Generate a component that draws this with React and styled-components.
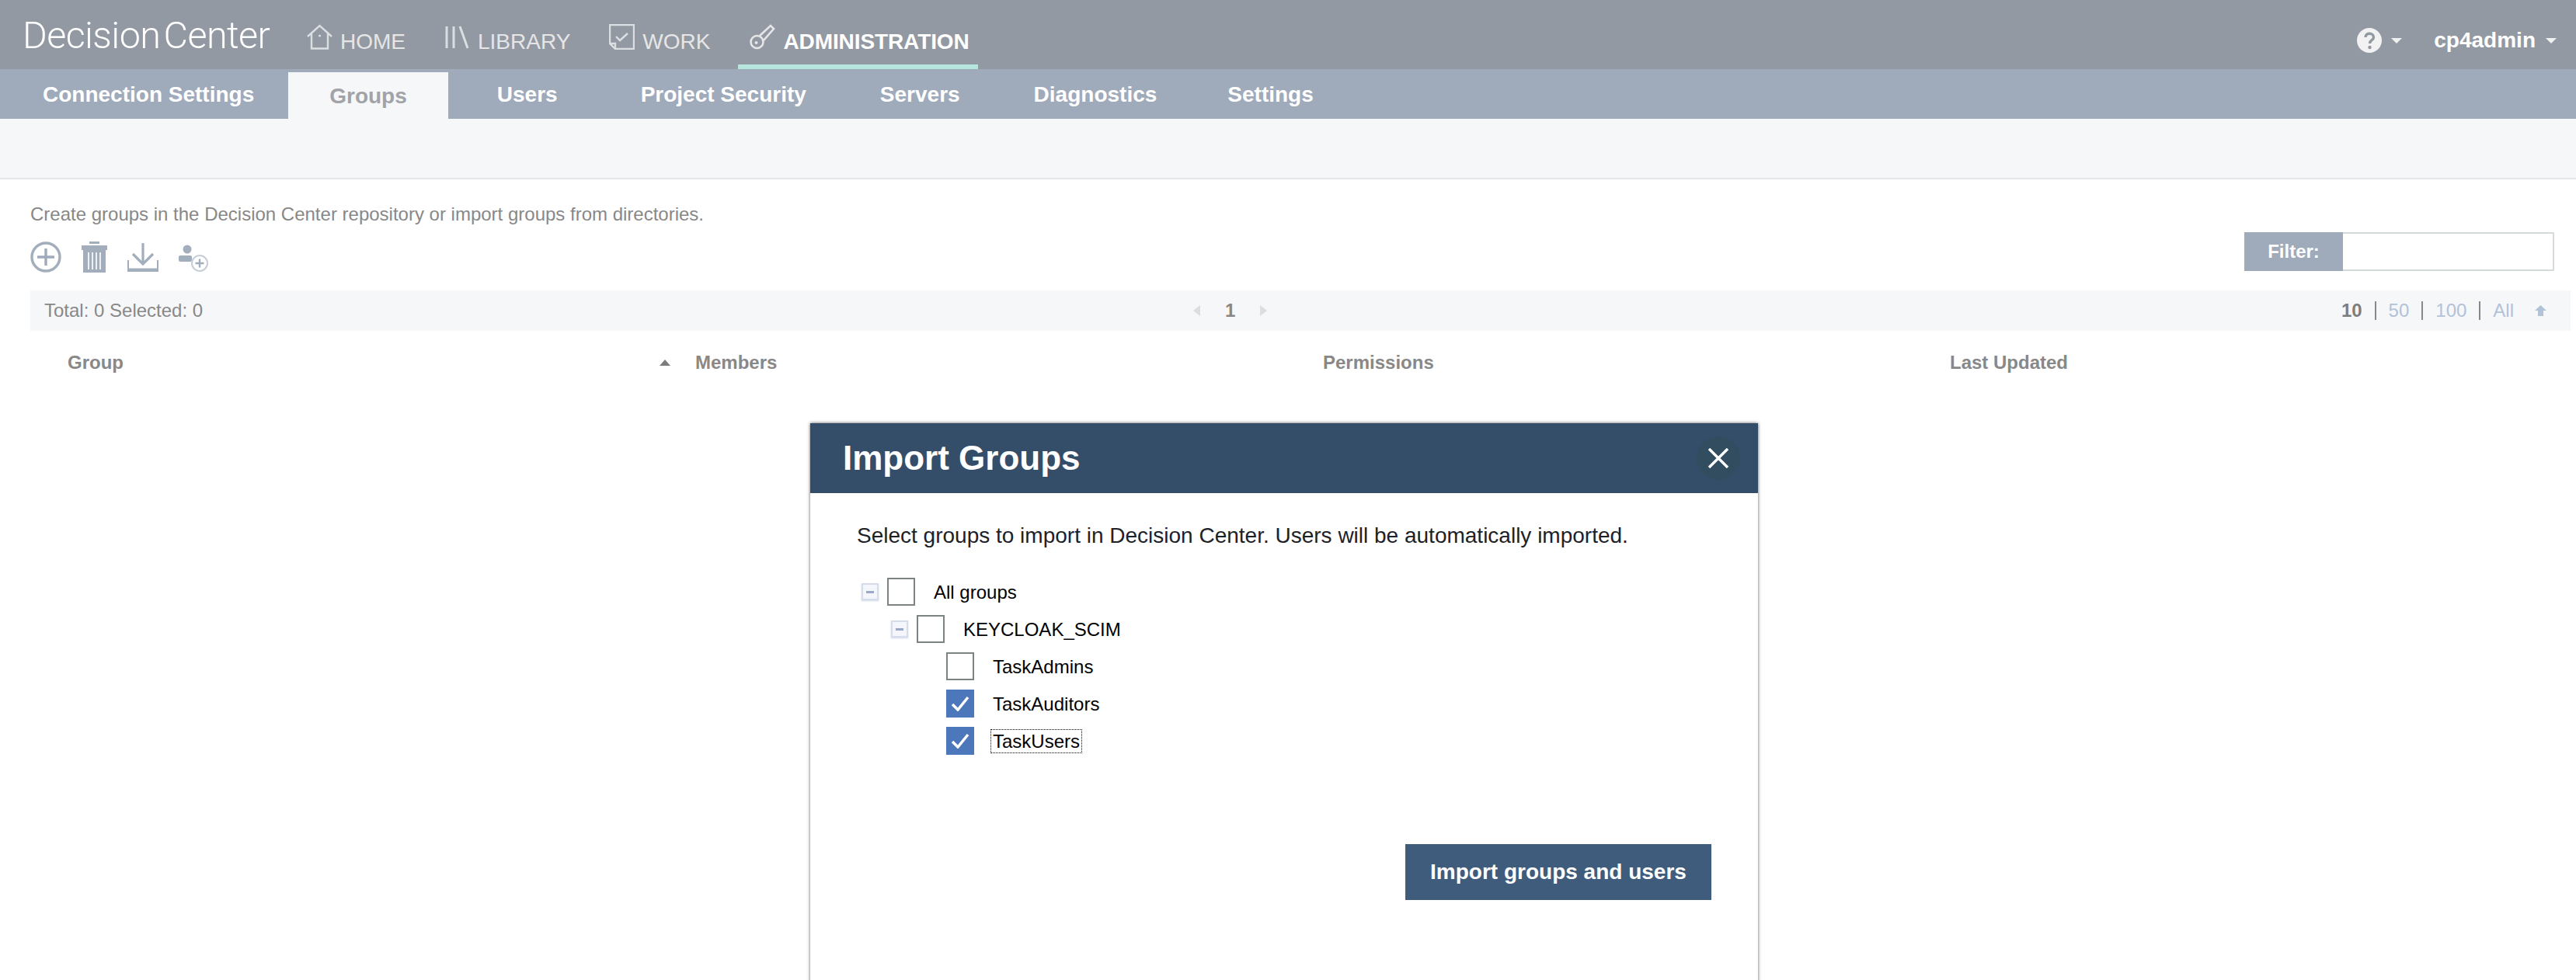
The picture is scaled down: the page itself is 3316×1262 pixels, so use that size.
import React from 'react'
import styled, { createGlobalStyle } from 'styled-components'

const GlobalStyle = createGlobalStyle`
    html, body {
        margin: 0;
        padding: 0;
        height: 1262px;
        overflow: hidden;
        background: #fff;
        font-family: "Liberation Sans", Arial, sans-serif;
    }
`;

const Page = styled.div`
    position: relative;
    width: 3316px;
    height: 1262px;
    overflow: hidden;
`;

const TopBar = styled.div`
    display: flex;
    align-items: stretch;
    height: 89px;
    padding-left: 29px;
    background: #9299a3;
`;

const Logo = styled.div`
    width: 318px;
    margin-right: 33px;
    padding-top: 20px;
    font-family: Roboto, sans-serif;
    font-weight: 300;
    font-size: 48.5px;
    line-height: 52px;
    letter-spacing: -0.6px;
    word-spacing: -7px;
    white-space: nowrap;
    color: #fff;
`;

const NavItem = styled.div`
    display: flex;
    align-items: flex-start;
    gap: 10px;
    padding: 31px 11px 0 15px;
    margin-right: ${p => (p.$beforeActive ? 25 : 24)}px;
    font-size: 28px;
    line-height: 46px;
    font-weight: ${p => (p.$active ? 700 : 400)};
    letter-spacing: ${p => (p.$active ? '-0.1px' : '0')};
    color: ${p => (p.$active ? '#fff' : '#e6e6e6')};
    border-bottom: 6px solid ${p => (p.$active ? '#b6e5de' : 'transparent')};
    box-sizing: border-box;
`;

const UserArea = styled.div`
    display: flex;
    align-items: center;
    margin-left: auto;
    padding: 15px 25px 0 0;
`;

const UserName = styled.div`
    margin: 0 13px 0 41px;
    font-size: 28px;
    font-weight: 700;
    color: #fff;
`;

const Caret = styled.div`
    width: 0;
    height: 0;
    margin-left: ${p => (p.$flush ? 0 : 12)}px;
    border-left: 7px solid transparent;
    border-right: 7px solid transparent;
    border-top: 7px solid #f0f0f0;
`;

const TabBar = styled.div`
    display: flex;
    height: 64px;
    background: #9faabb;
`;

const Tab = styled.div`
    display: flex;
    align-items: center;
    padding-top: 1px;
    padding-left: ${p => p.$left}px;
    padding-right: ${p => p.$right || 0}px;
    font-size: 28px;
    font-weight: 700;
    color: #fff;
    white-space: nowrap;
`;

const ActiveTab = styled(Tab)`
    margin-top: 4px;
    padding-top: 2px;
    background: #f6f7f9;
    color: #a1a3a7;
`;

const SubBar = styled.div`
    height: 76px;
    background: #f6f7f9;
    border-bottom: 2px solid #e2e8e6;
`;

const Content = styled.div`
    padding: 31px 7px 0 39px;
`;

const HeadRow = styled.div`
    display: flex;
    justify-content: space-between;
    align-items: flex-end;
`;

const Description = styled.div`
    font-size: 24px;
    line-height: 28px;
    color: #888;
`;

const Toolbar = styled.div`
    display: flex;
    align-items: flex-end;
    gap: 26px;
    margin-top: 21px;
`;

const FilterBox = styled.div`
    display: flex;
    height: 50px;
    margin: 0 21px 2px 0;
`;

const FilterLabel = styled.div`
    display: flex;
    align-items: center;
    justify-content: center;
    width: 127px;
    background: #9faabb;
    color: #fff;
    font-size: 24px;
    font-weight: 700;
`;

const FilterInput = styled.div`
    width: 272px;
    box-sizing: border-box;
    border: 2px solid #d5dbdb;
    border-left: none;
    background: #fff;
`;

const InfoBar = styled.div`
    display: flex;
    align-items: center;
    height: 52px;
    margin-top: 23px;
    background: #f6f7f9;
    font-size: 24px;
    color: #888;
`;

const Totals = styled.div`
    width: 1497px;
    box-sizing: border-box;
    padding-left: 18px;
`;

const Pager = styled.div`
    display: flex;
    align-items: center;
    gap: 32px;
    font-weight: 700;
`;

const PagerArrow = styled.div`
    width: 0;
    height: 0;
    border-top: 7px solid transparent;
    border-bottom: 7px solid transparent;
    ${p => (p.$left
        ? 'border-right: 9px solid #dcdde0;'
        : 'border-left: 9px solid #dcdde0;')}
`;

const PageSizes = styled.div`
    display: flex;
    align-items: center;
    margin-left: auto;
    padding-right: 31px;
`;

const SizeValue = styled.span`
    font-weight: ${p => (p.$current ? 700 : 400)};
    color: ${p => (p.$current ? '#7d7d7d' : '#b2c2d8')};
`;

const Divider = styled.span`
    width: 2px;
    height: 24px;
    margin: 0 16px;
    background: #888;
`;

const UpArrow = styled.svg`
    margin-left: 27px;
`;

const TableHead = styled.div`
    display: grid;
    grid-template-columns: 808px 808px 807px 1fr;
    padding-left: 48px;
    height: 82px;
    align-items: center;
`;

const HeadCell = styled.div`
    display: flex;
    align-items: center;
    justify-content: space-between;
    padding-right: 32px;
    font-size: 24px;
    font-weight: 700;
    color: #888;
`;

const SortArrow = styled.div`
    width: 0;
    height: 0;
    border-left: 7.5px solid transparent;
    border-right: 7.5px solid transparent;
    border-bottom: 8px solid #7d7d7d;
`;

const Dialog = styled.div`
    position: absolute;
    left: 1043px;
    top: 545px;
    width: 1220px;
    height: 800px;
    background: #fff;
    box-shadow: 0 0 4px rgba(0, 0, 0, 0.65);
`;

const DialogHeader = styled.div`
    display: flex;
    align-items: center;
    justify-content: space-between;
    height: 90px;
    padding: 0 23px 0 42px;
    background: #344d69;
`;

const DialogTitle = styled.div`
    font-size: 44px;
    font-weight: 700;
    color: #fff;
`;

const CloseButton = styled.div`
    display: flex;
    align-items: center;
    justify-content: center;
    width: 56px;
    height: 56px;
    border-radius: 50%;
    background: #324c60;
`;

const DialogBody = styled.div`
    padding: 39px 60px 0 60px;
`;

const Instruction = styled.div`
    font-size: 28px;
    line-height: 32px;
    color: #1d2228;
`;

const Tree = styled.div`
    display: flex;
    flex-direction: column;
    gap: 12px;
    margin-top: 38px;
`;

const TreeRow = styled.div`
    display: flex;
    align-items: center;
    height: 36px;
    padding-left: ${p => 6 + p.$level * 38}px;
`;

const Expander = styled.div`
    display: flex;
    align-items: center;
    justify-content: center;
    flex: none;
    width: 22px;
    height: 22px;
    margin-right: 11px;
    box-sizing: border-box;
    border: 2px solid #d5dcec;
    background: #f4f6fb;
    box-shadow: 0 1px 2px rgba(100, 120, 170, 0.3);
    visibility: ${p => (p.$hidden ? 'hidden' : 'visible')};

    &::before {
        content: '';
        width: 10px;
        height: 3px;
        background: #9aa8c8;
    }
`;

const CheckBox = styled.div`
    display: flex;
    align-items: center;
    justify-content: center;
    flex: none;
    width: 36px;
    height: 36px;
    box-sizing: border-box;
    border: ${p => (p.$checked ? 'none' : '2px solid #7c8483')};
    background: ${p => (p.$checked ? '#4d77bb' : '#fff')};
`;

const TreeLabel = styled.div`
    margin-left: 21px;
    padding: 0 2px;
    line-height: 29px;
    font-size: 24px;
    color: #000;
    border: 1px ${p => (p.$focused ? 'dotted #000' : 'solid transparent')};
`;

const ButtonRow = styled.div`
    display: flex;
    justify-content: flex-end;
    margin-top: 115px;
`;

const ImportButton = styled.div`
    display: flex;
    align-items: center;
    justify-content: center;
    width: 394px;
    height: 72px;
    background: #3f5c7d;
    color: #fff;
    font-size: 28px;
    font-weight: 700;
`;

const HomeIcon = () => (
    <svg width="33" height="33" viewBox="0 0 33 33" fill="none" stroke="#dcdfe2" strokeWidth="2.4">
        <path d="M1 16 L16.5 2 L32 16 M6 12 V31.5 H27 V12" />
        <circle cx="16.5" cy="15" r="1.6" fill="#dcdfe2" stroke="none" />
    </svg>
);

const LibraryIcon = () => (
    <svg width="33" height="33" viewBox="0 0 33 33" fill="none" stroke="#dcdfe2" strokeWidth="3">
        <path d="M3 3 V31 M12 3 V31 M20 3 L30 31" />
    </svg>
);

const WorkIcon = () => (
    <svg width="33" height="33" viewBox="0 0 33 33" fill="none" stroke="#dcdfe2" strokeWidth="2.4">
        <path d="M1 1 H32 V32 H8 L1 25 Z M1 25 H8 V32" />
        <path d="M9 16 L14 21 L24 12" />
    </svg>
);

const KeyIcon = () => (
    <svg width="33" height="33" viewBox="0 0 33 33" fill="none" stroke="#e6e6e6" strokeWidth="2.6">
        <path d="M13 15 L27 2 L31 6 L18 21" />
        <circle cx="9.5" cy="23" r="8" />
        <circle cx="8.5" cy="24" r="2" fill="#e6e6e6" stroke="none" />
    </svg>
);

const HelpIcon = () => (
    <svg width="32" height="32" viewBox="0 0 32 32">
        <circle cx="16" cy="16" r="16" fill="#f2f2f2" />
        <path d="M11 12 C11 5.5 21.5 6 21.5 12 C21.5 16 16.5 15.5 16.5 20" fill="none" stroke="#9299a3" strokeWidth="3.4" />
        <circle cx="16.5" cy="25" r="2.2" fill="#9299a3" />
    </svg>
);

const AddIcon = () => (
    <svg width="40" height="40" viewBox="0 0 40 40" fill="none" stroke="#a3aebd" strokeWidth="3.4">
        <circle cx="20" cy="20" r="18" />
        <path d="M20 9 V31 M9 20 H31" stroke="#9faabb" />
    </svg>
);

const TrashIcon = () => (
    <svg width="33" height="40" viewBox="0 0 33 40">
        <rect x="10" y="0" width="13" height="3" fill="#a3aebd" />
        <path d="M0 5 H33 V11 H31 V40 H2 V11 H0 Z" fill="#a3aebd" />
        <path d="M8 14 V36 M13 14 V36 M18 14 V36 M23 14 V36" stroke="#fff" strokeWidth="1.6" transform="translate(1 0)" />
    </svg>
);

const ImportIcon = () => (
    <svg width="40" height="38" viewBox="0 0 40 38" fill="none" stroke="#a3aebd">
        <path d="M20 0 V26 M7 14 L20 27 L33 14" strokeWidth="3.2" />
        <path d="M1 22 V36 H39 V22" strokeWidth="2" />
        <path d="M1 34.5 H39" strokeWidth="4" />
    </svg>
);

const UserAddIcon = () => (
    <svg width="38" height="36" viewBox="0 0 38 36">
        <circle cx="11" cy="6" r="5.5" fill="#a3aebd" />
        <rect x="0" y="14" width="17" height="8" rx="2" fill="#a3aebd" />
        <circle cx="27" cy="24" r="10" fill="#fff" stroke="#c6cdd6" strokeWidth="2" />
        <path d="M27 18.5 V29.5 M21.5 24 H32.5" stroke="#a3aebd" strokeWidth="2.4" />
    </svg>
);

const treeRows = [
    { label: 'All groups', level: 0, expander: true },
    { label: 'KEYCLOAK_SCIM', level: 1, expander: true },
    { label: 'TaskAdmins', level: 2 },
    { label: 'TaskAuditors', level: 2, checked: true },
    { label: 'TaskUsers', level: 2, checked: true, focused: true },
];

const navItems = [
    { label: 'HOME', Icon: HomeIcon },
    { label: 'LIBRARY', Icon: LibraryIcon },
    { label: 'WORK', Icon: WorkIcon, beforeActive: true },
    { label: 'ADMINISTRATION', Icon: KeyIcon, active: true },
];

export default function App() {
    return (
        <Page>
            <GlobalStyle />
            <TopBar>
                <Logo>Decision Center</Logo>
                {navItems.map(({ label, Icon, active, beforeActive }) => (
                    <NavItem key={label} $active={active} $beforeActive={beforeActive}>
                        <Icon />
                        <span>{label}</span>
                    </NavItem>
                ))}
                <UserArea>
                    <HelpIcon />
                    <Caret />
                    <UserName>cp4admin</UserName>
                    <Caret $flush />
                </UserArea>
            </TopBar>
            <TabBar>
                <Tab $left={55} $right={44}>Connection Settings</Tab>
                <ActiveTab $left={53} $right={53}>Groups</ActiveTab>
                <Tab $left={63}>Users</Tab>
                <Tab $left={107}>Project Security</Tab>
                <Tab $left={95}>Servers</Tab>
                <Tab $left={95}>Diagnostics</Tab>
                <Tab $left={91}>Settings</Tab>
            </TabBar>
            <SubBar />
            <Content>
                <HeadRow>
                    <div>
                        <Description>Create groups in the Decision Center repository or import groups from directories.</Description>
                        <Toolbar>
                            <AddIcon />
                            <TrashIcon />
                            <ImportIcon />
                            <UserAddIcon />
                        </Toolbar>
                    </div>
                    <FilterBox>
                        <FilterLabel>Filter:</FilterLabel>
                        <FilterInput />
                    </FilterBox>
                </HeadRow>
                <InfoBar>
                    <Totals>Total: 0 Selected: 0</Totals>
                    <Pager>
                        <PagerArrow $left />
                        <span>1</span>
                        <PagerArrow />
                    </Pager>
                    <PageSizes>
                        <SizeValue $current>10</SizeValue>
                        <Divider />
                        <SizeValue>50</SizeValue>
                        <Divider />
                        <SizeValue>100</SizeValue>
                        <Divider />
                        <SizeValue>All</SizeValue>
                        <UpArrow width="15" height="14" viewBox="0 0 15 14">
                            <path d="M7.5 0 L15 7 H11 V14 H4 V7 H0 Z" fill="#b2c2d8" />
                        </UpArrow>
                    </PageSizes>
                </InfoBar>
                <TableHead>
                    <HeadCell>Group<SortArrow /></HeadCell>
                    <HeadCell>Members</HeadCell>
                    <HeadCell>Permissions</HeadCell>
                    <HeadCell>Last Updated</HeadCell>
                </TableHead>
            </Content>
            <Dialog>
                <DialogHeader>
                    <DialogTitle>Import Groups</DialogTitle>
                    <CloseButton>
                        <svg width="26" height="26" viewBox="0 0 26 26" stroke="#fff" strokeWidth="3.4">
                            <path d="M1 1 L25 25 M25 1 L1 25" />
                        </svg>
                    </CloseButton>
                </DialogHeader>
                <DialogBody>
                    <Instruction>Select groups to import in Decision Center. Users will be automatically imported.</Instruction>
                    <Tree>
                        {treeRows.map(row => (
                            <TreeRow key={row.label} $level={row.level}>
                                <Expander $hidden={!row.expander} />
                                <CheckBox $checked={row.checked}>
                                    {row.checked && (
                                        <svg width="24" height="20" viewBox="0 0 24 20" fill="none" stroke="#fff" strokeWidth="3.5">
                                            <path d="M2 11 L9 18 L22 2" />
                                        </svg>
                                    )}
                                </CheckBox>
                                <TreeLabel $focused={row.focused}>{row.label}</TreeLabel>
                            </TreeRow>
                        ))}
                    </Tree>
                    <ButtonRow>
                        <ImportButton>Import groups and users</ImportButton>
                    </ButtonRow>
                </DialogBody>
            </Dialog>
        </Page>
    );
}
